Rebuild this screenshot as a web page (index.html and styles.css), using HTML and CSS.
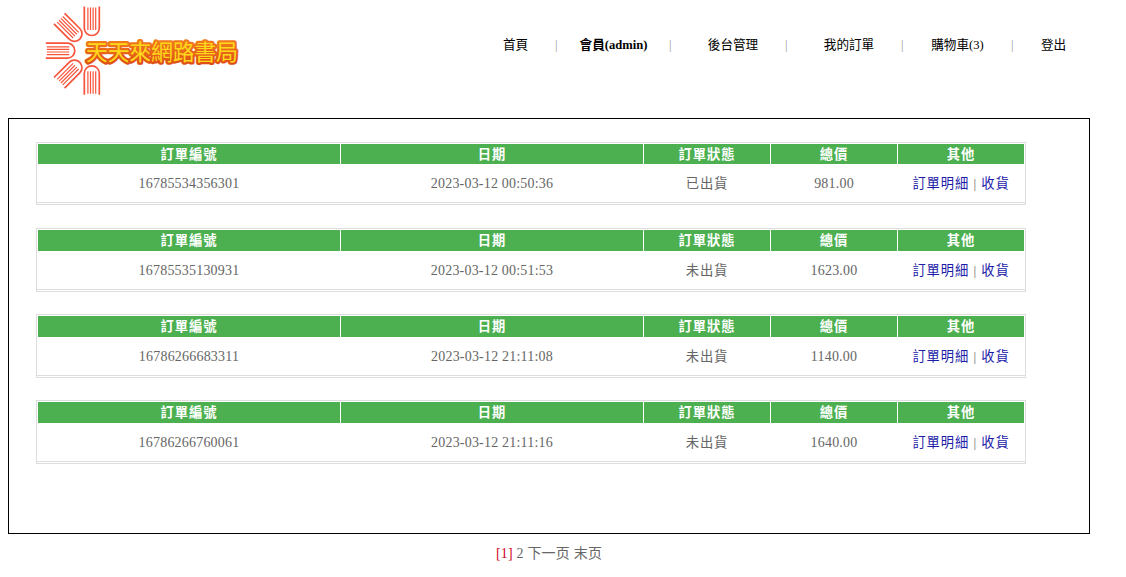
FILE: index.html
```html
<!DOCTYPE html>
<html lang="zh-Hant">
<head>
<meta charset="utf-8">
<title>天天來網路書局</title>
<link rel="stylesheet" href="styles.css">
</head>
<body>
<header class="header">
  <svg class="logo" viewBox="40 0 206 100" width="206" height="100">
    <defs>
      <linearGradient id="flame" x1="0" y1="0" x2="0" y2="1">
        <stop offset="0" stop-color="#f58a1c"/>
        <stop offset="1" stop-color="#dc4a14"/>
      </linearGradient>
      <g id="book">
        <path d="M-30-7.500H-8.500A7.500 7.500 0 0 1-8.500 7.500H-30" stroke-width="1.700"/>
        <path d="M-29-3.900H-6.500M-29-1.300H-6.500M-29 1.300H-6.500M-29 3.900H-6.500" stroke-width="1.200"/>
      </g>
    </defs>
    <g class="books">
      <use href="#book" transform="translate(75.800 50.700)"/>
      <use href="#book" transform="translate(91.800 36.500) rotate(90)"/>
      <use href="#book" transform="translate(80.500 39.800) rotate(45)"/>
      <use href="#book" transform="translate(80.500 61.600) rotate(-45)"/>
      <use href="#book" transform="translate(91.800 64.800) rotate(-90)"/>
    </g>
    <text class="logo-text" x="86" y="60" textLength="152">天天來網路書局</text>
  </svg>
  <nav class="nav">
    <a>首頁</a><i>|</i>
    <a class="member">會員(admin)</a><i class="near">|</i>
    <a>後台管理</a><i>|</i>
    <a>我的訂單</a><i>|</i>
    <a>購物車(3)</a><i>|</i>
    <a>登出</a>
  </nav>
</header>
<main class="orders">
  <section class="order">
    <b>訂單編號</b><b>日期</b><b>訂單狀態</b><b>總價</b><b>其他</b>
    <span>16785534356301</span><span>2023-03-12 00:50:36</span><span class="zh">已出貨</span><span>981.00</span><span class="zh"><a>訂單明細</a> | <a>收貨</a></span>
  </section>
  <section class="order">
    <b>訂單編號</b><b>日期</b><b>訂單狀態</b><b>總價</b><b>其他</b>
    <span>16785535130931</span><span>2023-03-12 00:51:53</span><span class="zh">未出貨</span><span>1623.00</span><span class="zh"><a>訂單明細</a> | <a>收貨</a></span>
  </section>
  <section class="order">
    <b>訂單編號</b><b>日期</b><b>訂單狀態</b><b>總價</b><b>其他</b>
    <span>16786266683311</span><span>2023-03-12 21:11:08</span><span class="zh">未出貨</span><span>1140.00</span><span class="zh"><a>訂單明細</a> | <a>收貨</a></span>
  </section>
  <section class="order">
    <b>訂單編號</b><b>日期</b><b>訂單狀態</b><b>總價</b><b>其他</b>
    <span>16786266760061</span><span>2023-03-12 21:11:16</span><span class="zh">未出貨</span><span>1640.00</span><span class="zh"><a>訂單明細</a> | <a>收貨</a></span>
  </section>
</main>
<footer class="pager"><span class="current">[1]</span> 2 下一页 末页</footer>
</body>
</html>
```
FILE: styles.css
```css
* { box-sizing: border-box; }
body {
  margin: 0;
  background: #fff;
  color: #666;
  font: 14px "Liberation Serif", "Noto Sans CJK TC", serif;
  overflow: hidden;
}
.header { display: flex; height: 118px; padding-left: 40px; }
.logo { flex: none; }
.books { fill: none; stroke: #f8543c; }
.logo-text {
  font: 400 22px "Noto Sans CJK TC", sans-serif;
  fill: #ffd81c;
  stroke: url(#flame);
  stroke-width: 4.5px;
  stroke-linejoin: round;
  paint-order: stroke;
}
.nav {
  display: grid;
  grid-template-columns: 25px 52px 67px 61px 50px 66px 50px 57px 53px 57px 25px;
  height: 20px;
  margin: 35px 0 0 257px;
  color: #000;
  font-size: 12.6px;
  line-height: 20px;
  white-space: nowrap;
}
.nav a { display: flex; justify-content: center; }
.nav i { padding-left: 27px; color: #999; font-style: normal; }
.nav .near { padding-left: 22px; }
.member { font-weight: bold; }
.orders {
  width: 1082px;
  height: 416px;
  margin-left: 8px;
  padding: 23px 0 0 27px;
  border: 1px solid #000;
}
.order {
  display: grid;
  grid-template-columns: 302px 302px 126px 126px 126px;
  grid-template-rows: 21px 39px;
  column-gap: 1px;
  width: 990px;
  margin-bottom: 22px;
  padding: 1px;
  border: 1px solid #ddd;
  letter-spacing: .2px;
  text-align: center;
  white-space: nowrap;
}
.order:first-child { grid-template-rows: 20px 39px; margin-bottom: 23px; }
.order b {
  background: #4caf50;
  color: #fff;
  font-size: 13.3px;
  letter-spacing: .9px;
  line-height: 22px;
}
.order:first-child b { height: 20px; }
.order span {
  height: 39px;
  margin: 0 -1px;
  border-bottom: 1px solid #ddd;
  line-height: 40px;
}
.order .zh { font-size: 13.3px; letter-spacing: .9px; }
.order a { color: #1c1ca8; }
.pager {
  width: 1082px;
  margin-left: 8px;
  padding-top: 10px;
  line-height: 20px;
  text-align: center;
  letter-spacing: .2px;
}
.current { color: #d0021b; }
```
